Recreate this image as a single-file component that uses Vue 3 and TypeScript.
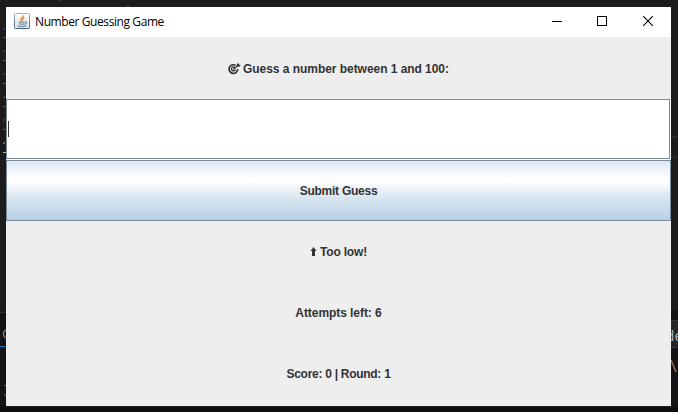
<script setup lang="ts">
import { ref } from 'vue'

const title = 'Number Guessing Game'
const guess = ref('')
const attempts = ref(6)
const score = ref(0)
const round = ref(1)
const editorMarks: number[] = [28, 36, 50, 59, 73, 82, 96, 105, 119, 128, 142, 151]
</script>

<template>
  <div class="desktop">
    <svg class="backdrop" width="678" height="412" aria-hidden="true">
      <rect width="678" height="412" fill="#1c1c1c" />
      <rect y="311" width="6" height="101" fill="#141414" />
      <rect x="671" y="311" width="7" height="101" fill="#141414" />
      <rect y="312" width="6" height="1" fill="#303030" />
      <rect y="346" width="6" height="1" fill="#0078d4" />
      <rect x="671" y="320" width="7" height="27" fill="#252525" />
      <rect x="671" y="320" width="7" height="1" fill="#353535" />
      <rect x="671" y="347" width="7" height="1" fill="#353535" />
      <rect y="407" width="678" height="5" fill="#0d0d0d" />
      <rect x="671" y="136" width="7" height="2" fill="#282828" />
      <rect x="671" y="156" width="7" height="2" fill="#282828" />
      <rect x="60" width="1" height="2" fill="#444" />
      <rect x="127" y="6" width="2" height="1" fill="#76552c" />
      <template v-for="(y, i) in editorMarks" :key="y">
        <path v-if="i % 2 === 0" :d="`M3 ${y + 2}L5 ${y}`" :stroke="i === 10 ? '#b4b4b4' : '#4b5665'" />
        <rect v-else x="3" :y="y + 1" width="3" height="1" :fill="i === 11 ? '#b4b4b4' : '#4b5665'" />
      </template>
      <path d="M6 330Q3.500 330 3.500 334T6 338" fill="none" stroke="#a8a095" />
      <path d="M4 385.500H6M4 394.500L6 395.500" stroke="#8d5b49" />
      <text class="code" x="666" y="341">de</text>
      <path d="M671 360L676 372" stroke="#a9705b" stroke-width="1.300" />
    </svg>

    <main class="window">
      <header class="titlebar">
        <svg class="java" width="16" height="16" viewBox="0 0 16 16">
          <defs>
            <linearGradient id="tile" x2="0" y2="1">
              <stop stop-color="#9fb3c4" />
              <stop offset="1" stop-color="#42617e" />
            </linearGradient>
            <linearGradient id="face" x2="0" y2="1">
              <stop stop-color="#fff" />
              <stop offset="1" stop-color="#dbe3e9" />
            </linearGradient>
          </defs>
          <rect x=".5" y=".5" width="15" height="15" rx="1" fill="url(#face)" stroke="url(#tile)" />
          <path d="M9.500 2.500Q9.500 4 7.500 5Q6 6.200 8 8M10.500 4.500Q8 5.700 9 7.300" fill="none" stroke="#ee8424" stroke-width="1.300" />
          <path d="M4.500 9H10.500M5 10.700Q7.500 11.800 10.500 10.700M11 8.800Q13.500 8.500 12.500 10Q12 11 10.800 11.300M3.500 13Q7.500 14 12.500 12.700" fill="none" stroke="#4f7698" />
        </svg>
        <span class="title">{{ title }}</span>
        <svg class="controls" width="138" height="30" viewBox="0 0 138 30" fill="none" stroke="#000">
          <path d="M19 14.500H29" />
          <rect x="64.500" y="9.500" width="9" height="9" />
          <path d="M110.200 9.200L119.800 18.800M119.800 9.200L110.200 18.800" stroke-width="1.100" />
        </svg>
      </header>

      <section class="game">
        <div class="row">
          <svg class="target" width="13" height="12" viewBox="0 0 13 12" fill="none" stroke="#333">
            <path d="M7.500 2.300A4.300 4.300 0 1 0 9.700 6" stroke-width="1.700" />
            <path d="M7 4.600A2 2 0 1 0 7.400 6.600M5.300 6.400L10.800 1.600" stroke-width="1.300" />
            <path d="M8.800 3.600V1L10.500 0V1.500L12.800 2L11.300 3.800Z" fill="#333" stroke="none" />
          </svg>
          <span class="prompt">Guess a number between 1 and 100:</span>
        </div>
        <label class="field">
          <span class="caret"></span><span>{{ guess }}</span>
        </label>
        <button class="submit" type="button"><span class="submit-text">Submit Guess</span></button>
        <div class="row">
          <svg class="arrow" width="7" height="10" viewBox="0 0 7 10">
            <path d="M3.500 0L6.500 4H5V9H2V4H.5Z" fill="#333" />
          </svg>
          <span class="hint">Too low!</span>
        </div>
        <div class="row"><span class="attempts">Attempts left: {{ attempts }}</span></div>
        <div class="row"><span class="score">Score: {{ score }} | Round: {{ round }}</span></div>
      </section>
    </main>
  </div>
</template>

<style>
body {
  margin: 0;
  overflow: hidden;
}
</style>

<style scoped>
.desktop {
  position: relative;
  box-sizing: border-box;
  width: 678px;
  height: 412px;
  padding: 7px 7px 6px 6px;
  background: #1c1c1c;
}
.backdrop {
  position: absolute;
  inset: 0;
}
.code {
  font: 14px 'Liberation Mono', monospace;
  fill: #a5b4c0;
}
.window {
  position: relative;
  width: 665px;
  height: 399px;
  background: #eee;
}
.titlebar {
  display: flex;
  align-items: center;
  box-sizing: border-box;
  height: 30px;
  padding-left: 8px;
  background: #fff;
}
.java {
  margin-top: -2px;
}
.title {
  margin-left: 5px;
  font: 12px/16px 'Open Sans', 'Noto Sans', sans-serif;
  letter-spacing: -0.41px;
  color: #000;
  white-space: nowrap;
}
.controls {
  margin-left: auto;
}
.game {
  display: grid;
  grid-template-rows: repeat(6, 61px);
  padding-top: 1px;
  font: bold 12px/14px 'Liberation Sans', Arial, sans-serif;
  color: #333;
}
.row {
  display: flex;
  align-items: center;
  justify-content: center;
  white-space: nowrap;
}
.target {
  margin-right: 2px;
}
.prompt {
  letter-spacing: -0.045px;
}
.arrow {
  margin-right: 3px;
}
.hint {
  letter-spacing: -0.18px;
}
.attempts {
  letter-spacing: -0.06px;
}
.score {
  letter-spacing: -0.28px;
}
.submit-text {
  letter-spacing: -0.25px;
}
.field {
  display: flex;
  align-items: center;
  box-sizing: border-box;
  margin: 0 1px 1px 0;
  padding-left: 1px;
  border: 1px solid #7a8a99;
  background: #fff;
  box-shadow: 1px 1px 0 #fff;
}
.caret {
  width: 1px;
  height: 16px;
  background: #333;
}
.submit {
  display: flex;
  align-items: center;
  justify-content: center;
  padding: 0;
  border: 1px solid #7a8a99;
  border-radius: 0;
  background: linear-gradient(#dde8f3 0%, #fff 30%, #fff 34%, #dce8f2 60%, #b8cfe5 100%);
  font: inherit;
  color: inherit;
}
</style>
